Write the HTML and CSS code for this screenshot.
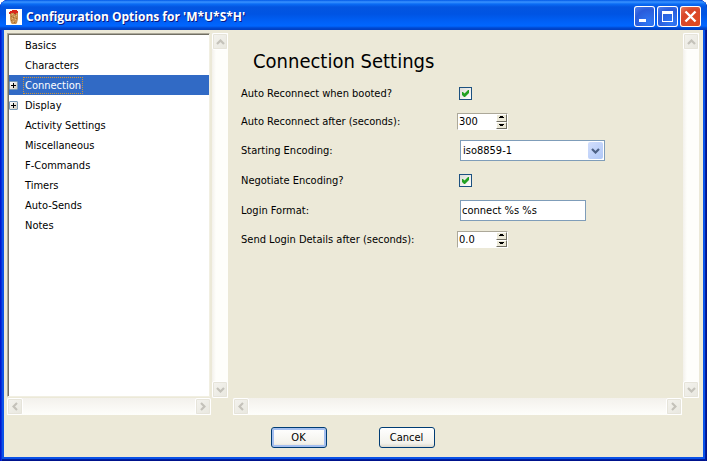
FILE: index.html
```html
<!DOCTYPE html>
<html lang="en">
<head>
<meta charset="utf-8">
<title>Configuration Options for 'M*U*S*H'</title>
<link rel="stylesheet" href="styles.css">
</head>
<body>
<svg class="defs" aria-hidden="true">
  <symbol id="up" viewBox="0 0 9 6"><path d="M1 5 4.500 1.500 8 5" fill="none" stroke="currentColor" stroke-width="2.200"/></symbol>
  <symbol id="down" viewBox="0 0 9 6"><path d="M1 1 4.500 4.500 8 1" fill="none" stroke="currentColor" stroke-width="2.200"/></symbol>
  <symbol id="left" viewBox="0 0 6 9"><path d="M5 1 1.500 4.500 5 8" fill="none" stroke="currentColor" stroke-width="2.200"/></symbol>
  <symbol id="right" viewBox="0 0 6 9"><path d="M1 1 4.500 4.500 1 8" fill="none" stroke="currentColor" stroke-width="2.200"/></symbol>
  <symbol id="spin-up" viewBox="0 0 5 3"><path d="M1 0h3v1h1v1H0V1h1z"/></symbol>
  <symbol id="spin-down" viewBox="0 0 5 3"><path d="M0 0h5v1H4v1H1V1H0z"/></symbol>
</svg>
<div class="window">
  <header class="titlebar">
    <svg class="app-icon" viewBox="0 0 16 16" aria-hidden="true">
      <path fill="#fff" d="M0 0h16v16H0z"/>
      <path fill="#c98f4e" d="M4 4h8v6l-1 4-1 1H6l-1-1-1-4z"/>
      <path fill="#e3b57c" d="M6 5h1v1H6zM8 7h1v1H8zM6 9h1v1H6zM9 10h1v1H9zM7 12h1v1H7zM10 6h1v1h-1z"/>
      <path fill="#a56c30" d="M5 7h1v1H5zM9 5h1v1H9zM7 8h1v1H7zM10 9h1v1h-1zM5 11h1v1H5zM8 13h1v1H8z"/>
      <path fill="#d8281c" d="M3 3h1V2h2V1h5v1h1v2h-2v1H8V4H5v1H3z"/>
    </svg>
    <h1 class="title">Configuration Options for 'M*U*S*H'</h1>
    <button class="caption" type="button" aria-label="Minimize"><svg viewBox="0 0 21 21"><path fill="#fff" d="M5 13h7v3H5z"/></svg></button>
    <button class="caption" type="button" aria-label="Maximize"><svg viewBox="0 0 21 21"><path fill="#fff" fill-rule="evenodd" d="M5 5h11v11H5zM6 8v7h9V8z"/></svg></button>
    <button class="caption close" type="button" aria-label="Close"><svg viewBox="0 0 21 21"><path fill="none" stroke="#fff" stroke-width="2.400" d="m5.500 5.500 10 10m0-10-10 10"/></svg></button>
  </header>
  <main class="panes">
    <nav class="pane sidebar">
      <ul class="tree">
        <li><a href="#">Basics</a></li>
        <li><a href="#">Characters</a></li>
        <li class="selected"><button class="expander" type="button" aria-label="Expand Connection"></button><a href="#">Connection</a></li>
        <li><button class="expander" type="button" aria-label="Expand Display"></button><a href="#">Display</a></li>
        <li><a href="#">Activity Settings</a></li>
        <li><a href="#">Miscellaneous</a></li>
        <li><a href="#">F-Commands</a></li>
        <li><a href="#">Timers</a></li>
        <li><a href="#">Auto-Sends</a></li>
        <li><a href="#">Notes</a></li>
      </ul>
      <div class="scroll vertical">
        <button type="button" aria-label="Scroll up"><svg width="9" height="6"><use href="#up"/></svg></button>
        <button type="button" aria-label="Scroll down"><svg width="9" height="6"><use href="#down"/></svg></button>
      </div>
      <div class="scroll horizontal">
        <button type="button" aria-label="Scroll left"><svg width="6" height="9"><use href="#left"/></svg></button>
        <button type="button" aria-label="Scroll right"><svg width="6" height="9"><use href="#right"/></svg></button>
      </div>
    </nav>
    <section class="pane settings">
      <form class="content" id="settings">
        <h2>Connection Settings</h2>
        <div class="fields">
          <label for="reconnect">Auto Reconnect when booted?</label>
          <input class="check" type="checkbox" id="reconnect" checked>
          <label for="delay">Auto Reconnect after (seconds):</label>
          <div class="spin">
            <input type="text" id="delay" value="300">
            <div class="arrows">
              <button type="button" aria-label="Increase"><svg width="5" height="3"><use href="#spin-up"/></svg></button>
              <button type="button" aria-label="Decrease"><svg width="5" height="3"><use href="#spin-down"/></svg></button>
            </div>
          </div>
          <label for="encoding">Starting Encoding:</label>
          <div class="combo">
            <select id="encoding"><option>iso8859-1</option></select>
            <span class="drop"><svg width="9" height="6"><use href="#down"/></svg></span>
          </div>
          <label for="negotiate">Negotiate Encoding?</label>
          <input class="check" type="checkbox" id="negotiate" checked>
          <label for="login">Login Format:</label>
          <input class="text" type="text" id="login" value="connect %s %s">
          <label for="send">Send Login Details after (seconds):</label>
          <div class="spin">
            <input type="text" id="send" value="0.0">
            <div class="arrows">
              <button type="button" aria-label="Increase"><svg width="5" height="3"><use href="#spin-up"/></svg></button>
              <button type="button" aria-label="Decrease"><svg width="5" height="3"><use href="#spin-down"/></svg></button>
            </div>
          </div>
        </div>
      </form>
      <div class="scroll vertical">
        <button type="button" aria-label="Scroll up"><svg width="9" height="6"><use href="#up"/></svg></button>
        <button type="button" aria-label="Scroll down"><svg width="9" height="6"><use href="#down"/></svg></button>
      </div>
      <div class="scroll horizontal">
        <button type="button" aria-label="Scroll left"><svg width="6" height="9"><use href="#left"/></svg></button>
        <button type="button" aria-label="Scroll right"><svg width="6" height="9"><use href="#right"/></svg></button>
      </div>
    </section>
  </main>
  <footer class="actions">
    <button class="push default" type="submit" form="settings">OK</button>
    <button class="push" type="button">Cancel</button>
  </footer>
</div>
</body>
</html>
```
FILE: styles.css
```css
* {
  box-sizing: border-box;
}

body {
  margin: 0;
  background: #fff;
  color: #000;
  font: 11px/13px "DejaVu Sans Condensed", "DejaVu Sans", sans-serif;
}

button,
input,
select {
  margin: 0;
  padding: 0;
  border: 0;
  border-radius: 0;
  color: inherit;
  font: inherit;
}

svg {
  display: block;
}

.defs {
  display: none;
}

.window {
  display: flex;
  flex-direction: column;
  min-height: 100vh;
  padding: 0 4px 4px;
  background: #0a52e8;
  border-radius: 8px 8px 0 0;
  box-shadow: inset 1px 0 #0019cf, inset 2px 0 #0831d9, inset -1px 0 #00138c, inset -2px 0 #001ea0, inset 0 -1px #00138c, inset 0 -2px #001ea0;
}

.titlebar {
  display: flex;
  align-items: center;
  gap: 2px;
  height: 30px;
  margin: 0 -4px;
  padding: 3px 6px 0;
  border-radius: 8px 8px 0 0;
  background: linear-gradient(#0058e6 0, #3a93ff 2px, #0a6cf5 4px, #0355e0 7px, #0054e3 14px, #0061f8 22px, #0066ff 26px, #0048d0 28px, #003dc0 30px);
}

.app-icon {
  width: 16px;
  height: 16px;
}

.title {
  flex: 1;
  margin: 0 0 0 2px;
  color: #fff;
  font: bold 12px/18px "Open Sans", sans-serif;
  text-shadow: 1px 1px #0a1883;
  white-space: nowrap;
}

.caption {
  width: 21px;
  height: 21px;
  border-radius: 3px;
  background: radial-gradient(circle at 70% 80%, #2f78f5, #2a5cdb 60%, #5585ee);
  box-shadow: inset 0 0 0 1px #fff;
}

.caption.close {
  background: radial-gradient(circle at 70% 80%, #e04a20, #d9472a 60%, #e88468);
}

.panes {
  display: flex;
  flex: 1;
  gap: 5px;
  padding: 3px 4px 0 3px;
  background: #ece9d8;
}

.pane {
  display: grid;
  grid-template-columns: 1fr 17px;
  grid-template-rows: 1fr 17px;
}

.sidebar {
  flex: 0 0 221px;
}

.settings {
  flex: 1;
}

.tree {
  margin: 0 1px 1px 0;
  padding: 1px 0 0 1px;
  border: 1px solid;
  border-color: #aca899 #f1efe2 #f1efe2 #aca899;
  box-shadow: inset 1px 1px #716f64;
  background: #fff;
  list-style: none;
}

.tree li {
  display: flex;
  align-items: center;
  height: 20px;
  padding-left: 15px;
}

.tree a {
  padding: 1px;
  color: inherit;
  text-decoration: none;
}

.tree .selected {
  background: #316ac5;
  color: #fff;
}

.selected a {
  outline: 1px dotted #ce953a;
}

.expander {
  width: 9px;
  height: 9px;
  margin: 0 6px 0 -15px;
  border: 1px solid #7898b5;
  border-radius: 1px;
  background:
    linear-gradient(#000, #000) center / 5px 1px no-repeat,
    linear-gradient(#000, #000) center / 1px 5px no-repeat,
    linear-gradient(135deg, #fff, #d2cdbf);
}

.scroll {
  display: flex;
  justify-content: space-between;
}

.vertical {
  flex-direction: column;
  margin-left: 1px;
  background: linear-gradient(90deg, #f3f1ec, #fefefb 4px);
}

.horizontal {
  background: linear-gradient(#f3f1ec, #fefefb);
}

.scroll button {
  display: grid;
  place-items: center;
  width: 16px;
  height: 17px;
  border: 1px solid #fff;
  border-radius: 2px;
  background: linear-gradient(135deg, #f4f3ee, #e8e7df);
  box-shadow: inset 0 0 0 1px #e6e4da, inset 0 -1px #c9c6b6;
  color: #c4c2ba;
}

.content h2 {
  margin: 15px 0 10px 20px;
  font: 20px/26px "DejaVu Sans Condensed", "DejaVu Sans", sans-serif;
}

.fields {
  display: grid;
  grid-template-columns: 216px 1fr;
  align-items: center;
  justify-items: start;
  row-gap: 10px;
  padding-left: 8px;
}

.check {
  appearance: none;
  display: grid;
  place-items: center;
  width: 13px;
  height: 13px;
  margin: 3px 2px;
  border: 1px solid #1c5180;
  background: linear-gradient(135deg, #dcdcd7, #fff);
}

.check:checked::before {
  content: "";
  width: 7px;
  height: 7px;
  background: #21a121;
  clip-path: polygon(0 29%, 14% 29%, 36% 50%, 86% 0, 100% 0, 100% 43%, 43% 100%, 29% 100%, 0 71%);
}

.spin {
  display: flex;
  width: 51px;
  height: 17px;
  border: 1px solid;
  border-color: #aca899 #fff #fff #aca899;
  background: #fff;
}

.spin input {
  flex: 1;
  min-width: 0;
  padding-left: 1px;
  background: transparent;
}

.arrows {
  display: flex;
  flex-direction: column;
  width: 11px;
}

.arrows button {
  display: grid;
  flex: 1;
  place-items: center;
  border: 1px solid;
  border-color: #fff #716f64 #716f64 #fff;
  background: #ece9d8;
}

.combo {
  display: flex;
  position: relative;
  width: 145px;
  margin-left: 3px;
}

.combo select {
  appearance: none;
  width: 100%;
  height: 21px;
  padding: 0 20px 0 2px;
  border: 1px solid #7f9db9;
  background: #fff;
}

.drop {
  position: absolute;
  top: 2px;
  right: 2px;
  bottom: 2px;
  display: grid;
  place-items: center;
  width: 15px;
  border-radius: 2px;
  background: linear-gradient(135deg, #d2defc, #b0c8f7);
  color: #4d6185;
  pointer-events: none;
}

.text {
  width: 126px;
  height: 21px;
  margin-left: 3px;
  padding: 0 1px;
  border: 1px solid #7f9db9;
  background: #fff;
}

.actions {
  display: flex;
  justify-content: center;
  gap: 52px;
  padding: 12px 2px 9px 0;
  background: #ece9d8;
}

.push {
  width: 56px;
  height: 21px;
  border: 1px solid #003c74;
  border-radius: 3px;
  background: linear-gradient(#fff, #f3f2ec 80%, #dcd8cc);
}

.default {
  box-shadow: inset 0 0 0 2px #a4bff0;
}
```
